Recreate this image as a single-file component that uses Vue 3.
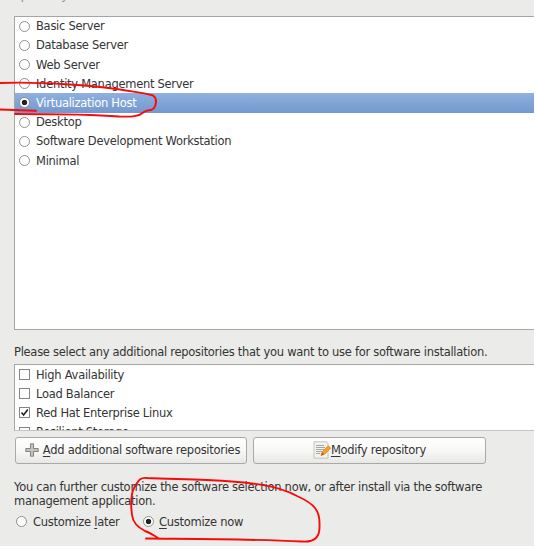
<script setup>
const packages = ['Basic Server', 'Database Server', 'Web Server', 'Identity Management Server', 'Virtualization Host', 'Desktop', 'Software Development Workstation', 'Minimal']
const selected = 'Virtualization Host'
const repositories = [
  { name: 'High Availability', checked: false },
  { name: 'Load Balancer', checked: false },
  { name: 'Red Hat Enterprise Linux', checked: true },
  { name: 'Resilient Storage', checked: false },
]
</script>

<template>
  <main class="window">
    <div class="intro"><span>optionally select a different set of software now.</span></div>
    <section class="list packages">
      <div v-for="name in packages" :key="name" class="row" :class="{ active: name === selected }">
        <i class="radio" :class="{ on: name === selected }"></i><span class="t">{{ name }}</span>
      </div>
    </section>
    <p class="prompt">Please select any additional repositories that you want to use for software installation.</p>
    <section class="list repos">
      <div v-for="repo in repositories" :key="repo.name" class="row">
        <i class="check"><svg v-if="repo.checked" viewBox="0 0 9 9"><path d="M1.5 4.5 3.6 7 7.8 1.6" fill="none" stroke="#222" stroke-width="1.6" /></svg></i>
        <span class="t">{{ repo.name }}</span>
      </div>
    </section>
    <div class="buttons">
      <button class="add">
        <svg class="plus" viewBox="0 0 14 14"><path d="M5.5.8h3v4.7h4.7v3H8.5v4.7h-3V8.5H.8v-3h4.7z" fill="#c4c4c2" stroke="#82827f" /></svg>
        <span><u>A</u>dd additional software repositories</span>
      </button>
      <button class="modify">
        <svg class="note" viewBox="0 0 18 18">
          <path d="M1 .8h12.5l1.5 2v14.4H1z" fill="#f2f2ef" stroke="#c3c3bf" />
          <path d="M3 4.500h8M3 6.500h9M3 8.500h8M3 10.500h6M3 12.500h4" stroke="#a5a5a2" />
          <path d="m8 14.500 1.300-3.700L15.200 4.700l2.600 2.400-6.200 6.200z" fill="#f6a027" stroke="#d9821a" stroke-width=".7" />
          <path d="m8 14.500 1.100-3.200 2 1.900z" fill="#a5602a" />
        </svg>
        <span><u>M</u>odify repository</span>
      </button>
    </div>
    <p class="further">You can further customize the software selection now, or after install via the software<br>management application.</p>
    <div class="choices">
      <label class="later"><i class="radio"></i><span>Customize <u>l</u>ater</span></label>
      <label class="now"><i class="radio on"></i><span><u>C</u>ustomize now</span></label>
    </div>
    <svg class="marks" viewBox="0 0 536 549">
      <path d="M0 83C40 81.5 94 85.500 120 89.500C134 92 144 92.500 153 95.500C157.500 98 156.500 106 153 109C150 111 147.500 109.500 144 112C139 116.500 132 117 119 116.500C95 114.500 60 114 15 114M0 109.500 36 110.800" />
      <path d="M146 538.500C190 539 250 539 302 541.500C316 542.500 320 536 319.500 525C320 511 315 504 297 496C277 485 250 482 207 480C185 479 165 479 147 478C139 477 138 482 134.500 487C130 495 131 507 132 515C133 523 139 528 145 531C151 533 153 535 158 538" />
    </svg>
  </main>
</template>

<style>
body { background: #fff; overflow: hidden; }
</style>

<style scoped>
* { box-sizing: border-box; }
.window { position: relative; width: 534px; height: 546px; padding-left: 14px; background: #ebebe9; color: #343434; font: 11.500px/14px "DejaVu Sans", sans-serif; letter-spacing: -0.28px; overflow: hidden; }
.intro { height: 16px; overflow: hidden; color: #8a8a88; }
.intro span { display: block; margin-top: -12px; white-space: nowrap; }
.list { width: 520px; background: #fff; border: 1px solid #a5a5a2; border-right: 0; overflow: hidden; }
.packages { height: 314px; }
.repos { height: 67px; border-bottom-color: #c4c4c1; }
.row { display: flex; align-items: center; height: 19.2px; padding-left: 4px; white-space: nowrap; }
.packages .row:first-child { margin-top: -0.4px; }
.row .t { margin-left: 6px; }
.active { color: #fff; background: linear-gradient(#8fb0df, #7398cd); }
.radio { flex: none; display: block; width: 11px; height: 11px; border: 1px solid #90908e; border-radius: 50%; background: #fff; }
.radio.on { background: radial-gradient(circle, #222 0 2.300px, #fff 3.100px); }
.check { flex: none; display: block; width: 11px; height: 11px; border: 1px solid #858583; background: #fff; }
.check svg { display: block; width: 9px; height: 9px; }
p { margin: 0; white-space: nowrap; }
.prompt { height: 34px; padding-top: 15px; }
.buttons { display: flex; gap: 6px; padding: 6px 0 0 1px; }
button { display: flex; align-items: center; justify-content: center; height: 27px; padding: 0 0 1px; border: 1px solid #aaa9a5; border-radius: 3px; background: linear-gradient(#fff, #f8f8f7 50%, #e7e7e5); color: inherit; font: inherit; letter-spacing: inherit; white-space: nowrap; }
.add { width: 232px; padding-left: 3px; }
.modify { width: 233px; }
.plus { width: 14px; height: 14px; margin-right: 4px; }
.note { width: 18px; height: 18px; }
u { text-underline-offset: 2px; text-decoration-thickness: 1px; }
.further { padding-top: 16px; line-height: 14.400px; }
.choices { display: flex; padding: 6px 0 0 2px; }
label { display: flex; align-items: center; gap: 6px; height: 14px; white-space: nowrap; }
.later { width: 127px; }
.now { gap: 5px; }
.marks { position: absolute; left: 0; top: 0; width: 536px; height: 549px; pointer-events: none; }
.marks path { fill: none; stroke: #f90a0a; stroke-width: 1.900; stroke-linecap: round; stroke-linejoin: round; }
</style>
